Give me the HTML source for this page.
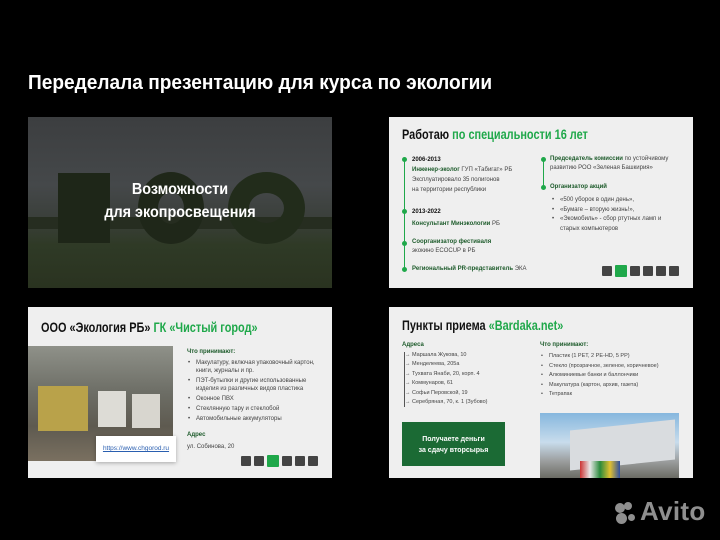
<!DOCTYPE html>
<html><head><meta charset="utf-8"><style>
*{margin:0;padding:0;box-sizing:border-box}
body{width:720px;height:540px;background:#000;position:relative;overflow:hidden;font-family:"Liberation Sans",sans-serif}
.a{position:absolute}
.s{position:absolute;width:304px;height:171px;background:#efefef;overflow:hidden}
.g{color:#1fa84a}
.t{font-weight:bold;font-size:14px;color:#111;transform:scaleX(.78);transform-origin:left top;white-space:nowrap}
.sm{font-size:6px;color:#444;line-height:8.5px}
.b{font-weight:bold;color:#1d5b2b}
.nav{position:absolute;display:flex;gap:3px}
.nav i{display:block;width:10px;height:10px;background:#444;border-radius:1px}
.nav i.on{background:#1fa84a;width:12px;height:12px;margin-top:-1px}
ul{list-style:none}
li{position:relative;padding-left:9px}
li:before{content:"•";position:absolute;left:1px}
</style></head><body>
<div class="a" style="left:28px;top:72px;color:#fff;font-weight:bold;font-size:20px;white-space:nowrap;transform:scaleX(.955);transform-origin:left top">Переделала презентацию для курса по экологии</div>

<!-- slide 1 -->
<div class="s" style="left:28px;top:117px;background:linear-gradient(#3c3e40 0%,#45484a 40%,#3a3f3a 60%,#2f3a26 75%,#2a3320 100%)">
 <div class="a" style="left:0;top:100px;width:304px;height:12px;background:#262d20"></div>
 <div class="a" style="left:30px;top:56px;width:52px;height:70px;background:#1e2618"></div>
 <div class="a" style="left:110px;top:55px;width:66px;height:72px;border:20px solid #1f2719;border-radius:50%"></div>
 <div class="a" style="left:200px;top:55px;width:77px;height:72px;border:21px solid #222c1b;border-radius:50%"></div>
 <div class="a" style="left:0;top:61px;width:304px;text-align:center;color:#fff;font-weight:bold;font-size:16px;line-height:23px;transform:scaleX(.9)">Возможности<br>для экопросвещения</div>
</div>

<!-- slide 2 -->
<div class="s" style="left:389px;top:117px">
 <div class="a t" style="left:13px;top:9px">Работаю <span class="g">по специальности 16 лет</span></div>
 <div class="a" style="left:15px;top:42px;width:1px;height:112px;background:#1fa84a"></div>
 <div class="a" style="left:13px;top:40px;width:5px;height:5px;border-radius:50%;background:#1fa84a"></div>
 <div class="a" style="left:13px;top:92px;width:5px;height:5px;border-radius:50%;background:#1fa84a"></div>
 <div class="a" style="left:13px;top:124px;width:5px;height:5px;border-radius:50%;background:#1fa84a"></div>
 <div class="a" style="left:13px;top:150px;width:5px;height:5px;border-radius:50%;background:#1fa84a"></div>
 <div class="a sm" style="left:23px;top:38px;width:130px;line-height:10px"><b style="color:#111">2006-2013</b><br><span class="b">Инженер-эколог</span> ГУП «Табигат» РБ<br>Эксплуатировало 35 полигонов<br>на территории республики</div>
 <div class="a sm" style="left:23px;top:89px;line-height:12px"><b style="color:#111">2013-2022</b><br><span class="b">Консультант Минэкологии</span> РБ</div>
 <div class="a sm" style="left:23px;top:121px;line-height:9px"><span class="b">Соорганизатор фестиваля</span><br>экокино ECOCUP в РБ</div>
 <div class="a sm" style="left:23px;top:148px"><span class="b">Региональный PR-представитель</span> ЭКА</div>
 <div class="a" style="left:154px;top:42px;width:1px;height:28px;background:#1fa84a"></div>
 <div class="a" style="left:152px;top:40px;width:5px;height:5px;border-radius:50%;background:#1fa84a"></div>
 <div class="a" style="left:152px;top:68px;width:5px;height:5px;border-radius:50%;background:#1fa84a"></div>
 <div class="a sm" style="left:161px;top:38px;width:140px"><span class="b">Председатель комиссии</span> по устойчивому развитию РОО «Зеленая Башкирия»</div>
 <div class="a sm" style="left:161px;top:66px"><span class="b">Организатор акций</span></div>
 <ul class="a sm" style="left:162px;top:79px;width:130px;line-height:9.5px"><li>«500 уборок в один день»,</li><li>«Бумаге – вторую жизнь!»,</li><li>«Экомобиль» - сбор ртутных ламп и старых компьютеров</li></ul>
 <div class="nav" style="left:213px;top:149px"><i></i><i class="on"></i><i></i><i></i><i></i><i></i></div>
</div>

<!-- slide 3 -->
<div class="s" style="left:28px;top:307px">
 <div class="a t" style="left:13px;top:12px">ООО «Экология РБ» <span class="g">ГК «Чистый город»</span></div>
 <div class="a" style="left:0;top:39px;width:145px;height:115px;background:linear-gradient(#8f9189 0%,#6d6e66 40%,#5e5a50 70%,#7a7060 100%)">
  <div class="a" style="left:10px;top:40px;width:50px;height:45px;background:#b9a24a"></div>
  <div class="a" style="left:70px;top:45px;width:28px;height:36px;background:#dddcd6"></div>
  <div class="a" style="left:104px;top:48px;width:28px;height:34px;background:#d8d6cf"></div>
 </div>
 <div class="a" style="left:68px;top:129px;width:80px;height:26px;background:#fff;box-shadow:0 1px 4px rgba(0,0,0,.3);font-size:6.5px;color:#2a5fb0;text-decoration:underline;text-align:center;line-height:26px">https://www.chgorod.ru</div>
 <div class="a sm" style="left:159px;top:41px"><span class="b">Что принимают:</span></div>
 <ul class="a sm" style="left:159px;top:52px;width:140px;line-height:8px"><li>Макулатуру, включая упаковочный картон, книги, журналы и пр.</li><li style="margin-top:2px">ПЭТ-бутылки и другие использованные изделия из различных видов пластика</li><li style="margin-top:2px">Оконное ПВХ</li><li style="margin-top:2px">Стеклянную тару и стеклобой</li><li style="margin-top:2px">Автомобильные аккумуляторы</li></ul>
 <div class="a sm" style="left:159px;top:124px"><span class="b">Адрес</span></div>
 <div class="a sm" style="left:159px;top:136px">ул. Собинова, 20</div>
 <div class="nav" style="left:213px;top:149px"><i></i><i></i><i class="on"></i><i></i><i></i><i></i></div>
</div>

<!-- slide 4 -->
<div class="s" style="left:389px;top:307px">
 <div class="a t" style="left:13px;top:10px">Пункты приема <span class="g">«Bardaka.net»</span></div>
 <div class="a sm" style="left:13px;top:34px"><span class="b">Адреса</span></div>
 <div class="a" style="left:15px;top:45px;width:1px;height:55px;background:#555"></div>
 <div class="a sm" style="left:16px;top:44px;line-height:9.4px;font-size:5.5px">→ Маршала Жукова, 10<br>→ Менделеева, 205а<br>→ Тухвата Янаби, 20, корп. 4<br>→ Коммунаров, 61<br>→ Софьи Перовской, 19<br>→ Серебряная, 70, к. 1 (Зубово)</div>
 <div class="a" style="left:13px;top:115px;width:103px;height:44px;background:#1b6a34;color:#fff;font-weight:bold;font-size:7px;text-align:center;padding-top:12px;line-height:11px">Получаете деньги<br>за сдачу вторсырья</div>
 <div class="a sm" style="left:151px;top:34px"><span class="b">Что принимают:</span></div>
 <ul class="a sm" style="left:151px;top:45px;width:150px;line-height:9.5px;font-size:5.5px"><li>Пластик (1 PET, 2 PE-HD, 5 PP)</li><li>Стекло (прозрачное, зеленое, коричневое)</li><li>Алюминиевые банки и баллончики</li><li>Макулатура (картон, архив, газета)</li><li>Тетрапак</li></ul>
 <div class="a" style="left:151px;top:106px;width:139px;height:65px;background:linear-gradient(#86b7de,#c8dcec 45%,#9a9c9c 75%,#6b6b64)">
  <div class="a" style="left:30px;top:12px;width:105px;height:40px;background:#d9dcdf;transform:skewY(-6deg)"></div>
  <div class="a" style="left:40px;top:48px;width:40px;height:17px;background:linear-gradient(90deg,#c33,#e8e8e8,#2a8a3c,#e0c030,#3050a0)"></div>
 </div>
</div>

<!-- Avito -->
<div class="a" style="left:615px;top:503px;width:10px;height:10px;border-radius:50%;background:#8f8f8f"></div>
<div class="a" style="left:624px;top:502px;width:8px;height:8px;border-radius:50%;background:#8f8f8f"></div>
<div class="a" style="left:616px;top:513px;width:11px;height:11px;border-radius:50%;background:#8f8f8f"></div>
<div class="a" style="left:628px;top:514px;width:7px;height:7px;border-radius:50%;background:#8f8f8f"></div>
<div class="a" style="left:640px;top:496px;color:#8f8f8f;font-weight:bold;font-size:26px;letter-spacing:.3px">Avito</div>
</body></html>
